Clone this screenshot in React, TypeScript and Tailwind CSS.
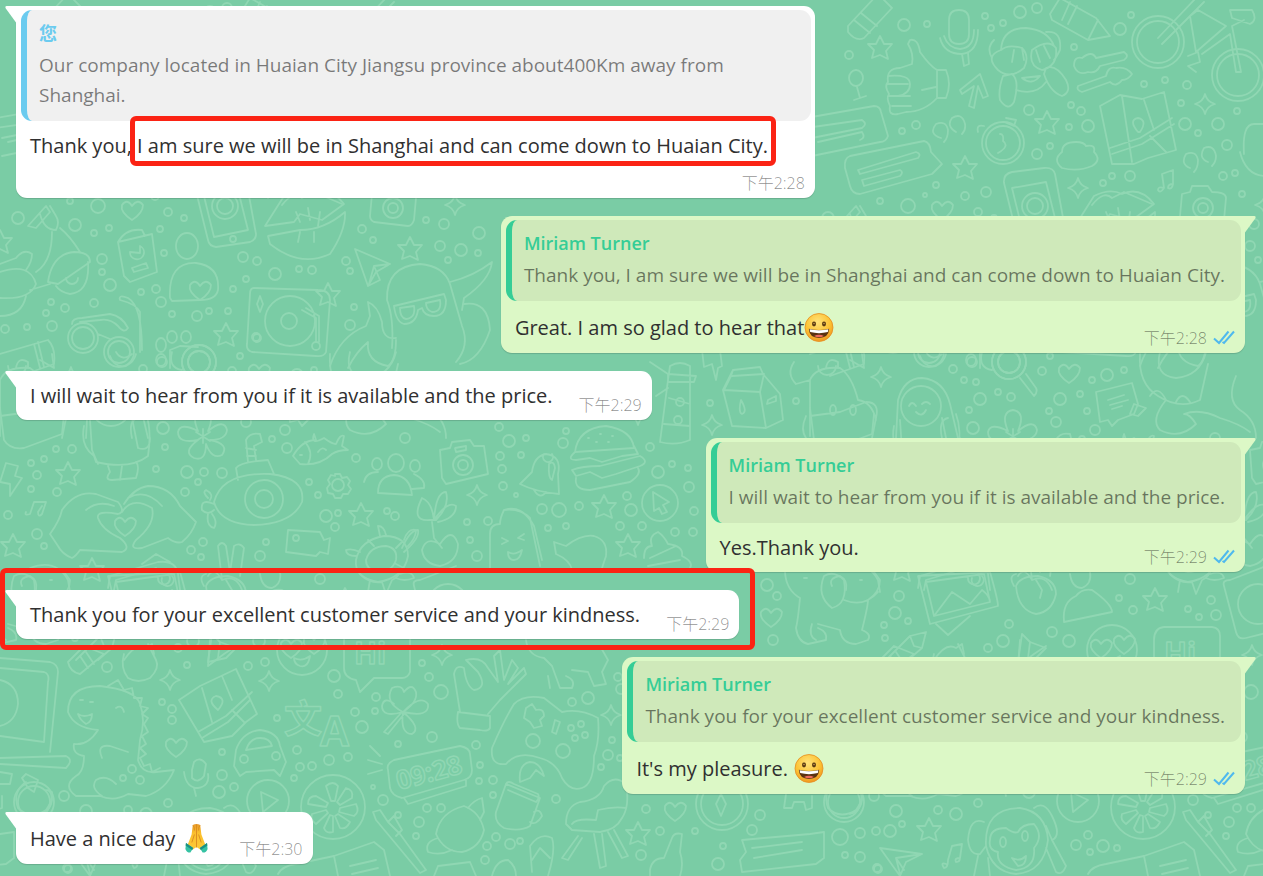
import type { ReactNode } from "react";
import { clsx } from "clsx";

type Message = {
  side: "in" | "out";
  quote?: { author: string; text: string; own?: boolean };
  body: ReactNode;
  time: string;
  boxed?: boolean;
};

/* ---------- Emoji ---------- */

function Grin({ className }: { className?: string }) {
  return (
    <svg viewBox="0 0 32 32" role="img" aria-label="😀" className={clsx("h-[33px] w-8 shrink-0", className)}>
      <defs>
        <radialGradient id="grin-face" cx="0.45" cy="0.3" r="0.75">
          <stop offset="0" stopColor="#ffe37a" />
          <stop offset="0.6" stopColor="#fcc233" />
          <stop offset="1" stopColor="#ee8f1c" />
        </radialGradient>
      </defs>
      <circle cx="15" cy="16" r="14" fill="url(#grin-face)" stroke="#e58e22" strokeWidth="0.8" />
      <ellipse cx="10" cy="12.5" rx="2" ry="2.4" fill="#5a3a12" />
      <ellipse cx="20" cy="12.5" rx="2" ry="2.4" fill="#5a3a12" />
      <circle cx="10" cy="12" r="0.8" fill="#c69a50" />
      <circle cx="20" cy="12" r="0.8" fill="#c69a50" />
      <path d="M4.8 17.2Q15 19.6 25.2 17.2Q24.6 26.4 15 26.4Q5.4 26.4 4.8 17.2Z" fill="#5b3211" />
      <path d="M5.6 17.8Q15 19.9 24.4 17.8L23.8 20.6Q15 22.8 6.2 20.6Z" fill="#fff" />
      <path d="M10 24.6Q15 21.8 20 24.6Q15 27 10 24.6Z" fill="#ee6a5c" />
    </svg>
  );
}

function Pray({ className }: { className?: string }) {
  return (
    <svg viewBox="0 0 32 32" role="img" aria-label="🙏" className={clsx("h-[33px] w-8 shrink-0", className)}>
      <defs>
        <linearGradient id="pray-skin" x1="0" y1="0" x2="0" y2="1">
          <stop offset="0" stopColor="#e79a2c" />
          <stop offset="0.35" stopColor="#fbc02d" />
          <stop offset="1" stopColor="#fdc936" />
        </linearGradient>
      </defs>
      <path d="M11.8 2.4Q15.5 0.8 19.2 2.4L20.4 12L24.4 22.4L19.6 27.2L15.5 24.6L11.4 27.2L6.6 22.4L10.6 12Z" fill="url(#pray-skin)" />
      <path d="M15.5 2V25M12 3Q13.6 4 13.4 8M19 3Q17.4 4 17.6 8M13.4 12L10.8 20M17.6 12L20.2 20" fill="none" stroke="#d98a1f" strokeWidth="0.9" />
      <path d="M5 20.4L12.2 25.6L9.4 30Q5.6 30.2 4.4 26.4Z" fill="#35c2a3" />
      <path d="M26 20.4L18.8 25.6L21.6 30Q25.4 30.2 26.6 26.4Z" fill="#35c2a3" />
      <path d="M5 20.4L12.2 25.6L11.2 27.4L4.6 23Z" fill="#1c8f84" />
      <path d="M26 20.4L18.8 25.6L19.8 27.4L26.4 23Z" fill="#1c8f84" />
    </svg>
  );
}

/* ---------- Wallpaper ---------- */

const TILE = 810;

const stars = [
  [880, 48], [1047, 123], [965, 168], [410, 249], [328, 295], [226, 335], [0, 242], [68, 474], [13, 546],
  [361, 515], [92, 570], [604, 507], [628, 546], [1155, 600], [638, 834], [929, 830],
];

const sparkles = [
  [1205, 104], [1078, 188], [455, 205], [477, 495], [638, 415], [712, 425], [881, 377], [170, 680], [269, 681],
  [611, 715], [442, 655],
];

const hearts = [
  [132, 210], [200, 290], [1069, 373], [771, 617], [176, 747], [675, 811], [125, 526], [1101, 648], [1124, 644],
];

const dots = [
  [904, 25, 6], [927, 24, 3], [849, 55, 4], [985, 16, 3], [1020, 12, 6], [1037, 8, 5], [991, 28, 3], [1003, 23, 3],
  [1120, 29, 6], [1131, 15, 3], [1074, 47, 3], [1144, 84, 3], [1165, 80, 3], [1187, 85, 4], [1181, 103, 3],
  [1185, 124, 6], [1218, 124, 6], [1198, 133, 3], [1237, 111, 3], [1227, 145, 5], [1029, 110, 5], [1071, 105, 3],
  [1081, 111, 4], [1088, 126, 6], [1069, 127, 3], [1037, 154, 5], [1050, 146, 3], [916, 125, 4], [902, 131, 3],
  [936, 185, 3], [925, 195, 2], [965, 196, 4], [986, 192, 5], [1103, 183, 3], [1112, 176, 3], [1130, 176, 5],
  [1223, 176, 4], [1235, 173, 3], [1242, 194, 3], [880, 201, 3],
  [18, 218, 6], [75, 225, 6], [98, 206, 7], [94, 233, 3], [109, 228, 3], [168, 212, 4], [184, 218, 3], [160, 229, 3],
  [164, 253, 3], [102, 259, 5], [102, 272, 3], [110, 285, 6], [141, 292, 3], [156, 289, 4], [161, 302, 5],
  [51, 302, 3], [46, 313, 3], [65, 308, 4], [94, 303, 4], [5, 329, 4], [27, 327, 3], [52, 326, 5], [172, 314, 3],
  [197, 316, 5], [209, 311, 3], [228, 311, 3], [243, 257, 5], [257, 261, 4], [246, 279, 3], [275, 274, 6],
  [299, 269, 3], [312, 270, 4], [233, 289, 3], [240, 356, 3], [256, 337, 4], [346, 261, 4], [350, 271, 3],
  [354, 307, 3], [350, 325, 5], [362, 229, 4], [373, 240, 3], [426, 220, 3], [444, 224, 5], [440, 246, 5],
  [461, 250, 6], [478, 253, 3], [448, 260, 3], [479, 233, 6],
  [163, 428, 6], [165, 447, 3], [72, 449, 4], [56, 449, 3], [44, 459, 3], [31, 463, 3], [37, 475, 4], [31, 489, 3],
  [57, 492, 4], [156, 469, 3], [187, 472, 6], [204, 472, 4], [222, 473, 5], [198, 482, 3], [185, 492, 4],
  [8, 515, 4], [37, 534, 5], [44, 546, 3], [203, 542, 4], [191, 550, 4], [201, 557, 3], [266, 542, 3],
  [260, 556, 5], [285, 430, 5], [272, 439, 3], [287, 448, 5], [405, 438, 5], [356, 458, 4], [309, 482, 3],
  [318, 495, 3], [326, 516, 6], [338, 513, 3], [335, 527, 4], [387, 511, 3], [395, 516, 4],
  [499, 427, 4], [509, 441, 6], [526, 438, 3], [500, 456, 4], [521, 455, 3], [502, 469, 4], [503, 486, 4],
  [516, 495, 2], [563, 443, 5], [566, 431, 3], [542, 509, 5], [559, 510, 7], [579, 506, 4], [548, 528, 3],
  [566, 526, 3], [650, 447, 4], [672, 464, 3], [658, 472, 6], [688, 468, 3], [689, 487, 5], [627, 496, 4],
  [631, 510, 6], [694, 511, 4], [693, 532, 4], [675, 532, 4], [642, 526, 4], [620, 526, 4], [467, 522, 3],
  [488, 521, 4], [470, 540, 3], [477, 556, 5], [710, 403, 3],
  [953, 369, 4], [972, 362, 5], [1042, 371, 4], [964, 380, 3], [976, 382, 3], [980, 399, 6], [998, 392, 3],
  [1011, 397, 4], [969, 410, 3], [1060, 399, 6], [1080, 394, 3], [1092, 380, 3], [1107, 375, 6], [1124, 370, 3],
  [1049, 411, 3], [1056, 422, 5], [1087, 411, 3], [796, 401, 3],
  [767, 585, 6], [777, 596, 4], [773, 640, 5], [899, 596, 5], [895, 613, 6], [884, 625, 3], [908, 621, 3],
  [885, 638, 3], [988, 648, 4], [1003, 641, 6], [1009, 624, 4], [1052, 632, 5], [1069, 641, 6], [1130, 579, 5],
  [1119, 598, 3], [1133, 610, 4], [1188, 609, 3], [1199, 617, 3], [1216, 615, 5], [1211, 600, 4],
  [107, 667, 5], [187, 665, 3], [248, 666, 4], [265, 662, 4], [334, 676, 6], [338, 694, 4], [376, 697, 4],
  [162, 702, 3], [172, 709, 4], [172, 720, 4], [277, 718, 3], [222, 752, 3], [297, 750, 4], [355, 712, 4],
  [375, 711, 3], [362, 727, 6], [329, 760, 5], [348, 757, 4], [300, 767, 4], [312, 766, 4], [294, 778, 3],
  [398, 744, 3], [222, 775, 5], [219, 792, 6], [234, 787, 4], [132, 769, 4], [123, 778, 3], [140, 780, 4],
  [64, 796, 5], [168, 803, 4], [383, 800, 5], [373, 787, 2], [398, 815, 3], [68, 869, 4],
  [432, 737, 5], [422, 663, 3], [429, 677, 4], [441, 692, 7], [476, 745, 4], [480, 765, 3], [479, 781, 3],
  [493, 780, 4], [427, 808, 4], [441, 808, 4], [419, 822, 5], [416, 836, 3], [487, 846, 4], [485, 860, 4],
  [496, 837, 4], [510, 844, 5], [520, 841, 3], [493, 795, 3], [556, 799, 4], [572, 702, 4], [588, 698, 6],
  [612, 740, 3], [608, 755, 5], [620, 758, 3], [601, 767, 3], [618, 677, 4], [621, 689, 5], [646, 809, 4],
  [660, 831, 4], [641, 855, 5], [695, 831, 3], [723, 846, 3], [718, 864, 6], [752, 830, 5], [760, 815, 5],
  [896, 811, 6], [938, 810, 4], [956, 814, 6], [840, 837, 8], [860, 833, 5], [876, 831, 4], [890, 831, 6],
  [902, 824, 3], [845, 855, 3], [860, 857, 5], [877, 868, 4], [1076, 845, 5], [1088, 835, 4], [1090, 852, 3],
  [1103, 846, 6], [1117, 848, 3],
];

const doodles = [
  // pencils, microphone, thumb
  "M848 26L878 -6L892 8L864 38Q856 42 848 32ZM854 20L870 33M861 13L877 26",
  "M1050 14L1060 -2L1096 18L1110 36L1088 40L1052 20ZM1062 20L1070 2M1068 24L1077 6M1088 40L1098 20",
  "M949 20Q949 10 959 10Q969 10 969 20V34Q969 44 959 44Q949 44 949 34ZM940 38Q944 54 962 54Q978 52 978 30M944 36Q948 48 960 49Q974 48 974 30M962 54L964 66L969 64L968 53",
  "M910 40Q918 38 920 52Q930 66 937 70L937 98Q924 112 906 112L898 114Q888 116 890 106Q886 98 889 94Q884 86 888 82Q886 68 900 68L912 64Q914 54 908 44ZM888 84H908M889 96H910M892 106H911M888 76Q910 74 910 84Q910 94 898 96M937 70H946Q952 84 946 98L937 98M922 90L936 87",
  // bicycle
  "M1132 42a26 26 0 1 0 52 0a26 26 0 1 0 -52 0M1137 42a21 21 0 1 0 42 0a21 21 0 1 0 -42 0M1212 75a26 26 0 1 0 52 0a26 26 0 1 0 -52 0M1217 75a21 21 0 1 0 42 0a21 21 0 1 0 -42 0",
  "M1158 38L1196 -2M1162 44L1204 2M1190 16L1196 52L1226 26L1198 10ZM1202 54L1230 34L1236 72L1241 72L1232 26L1244 20M1230 10H1252Q1258 20 1250 24L1232 18ZM1188 56L1198 52L1200 62L1188 66L1196 72",
  // monkey covering its eyes
  "M1001 50Q1002 28 1026 28Q1048 30 1054 46M1001 50Q984 56 998 70Q1010 80 1024 68Q1030 56 1022 48Q1008 44 1001 50ZM1032 50Q1028 66 1042 70Q1058 66 1056 48Q1048 38 1032 50ZM1046 32Q1062 30 1060 50Q1056 58 1054 60M994 40Q986 48 992 58M1003 76Q998 90 1000 100Q1008 112 1014 102Q1020 80 1012 74ZM1046 68Q1056 64 1066 80Q1072 92 1062 96Q1050 92 1044 74ZM1016 90Q1036 96 1046 82M1022 78Q1032 86 1040 76ZM1014 50L1012 62M1022 48L1024 60M1036 50L1040 62M1044 46L1050 58",
  // spoons, arrow, quote marks
  "M1074 66Q1074 56 1082 58Q1092 50 1096 58L1124 52Q1130 56 1124 60L1100 66Q1096 74 1088 72Q1078 76 1074 66ZM1078 86L1106 76Q1108 66 1116 68Q1126 66 1132 74Q1128 80 1122 80Q1116 88 1110 82L1082 92Q1076 90 1078 86Z",
  "M960 90L980 74L988 96L983 98L978 86L974 108L969 106L974 86L962 94Z",
  "M941 138Q928 134 936 124Q946 120 948 130Q948 138 944 142M956 132Q946 126 952 118Q962 112 965 124Q966 130 962 134M1190 168Q1180 164 1186 154Q1196 150 1198 160Q1198 168 1194 172M1208 162Q1198 158 1204 148Q1214 144 1216 156Q1216 162 1212 166",
  // note cards
  "M806 118L874 106Q880 106 881 112L888 136Q886 142 880 142L812 156M806 128L862 120Q868 124 862 128L812 138M818 142L862 132Q866 138 860 140",
  "M850 156L924 141Q930 142 931 152L942 164L932 174L860 194Q852 194 850 186L845 168Q844 158 850 156ZM858 170L916 152Q922 154 918 158L860 174ZM862 180L900 170Q904 172 900 176L864 186Z",
  // stopwatch, cloud, map
  "M982 143a21 21 0 1 0 42 0a21 21 0 1 0 -42 0M986 143a17 17 0 1 0 34 0a17 17 0 1 0 -34 0M1000 134Q1004 134 1003 141Q1010 146 998 153M1006 118L1016 120L1014 126L1004 122M978 132Q976 124 984 126",
  "M1062 168Q1052 160 1062 152Q1062 142 1076 142Q1084 142 1086 146Q1096 144 1094 152Q1102 160 1092 166Q1078 172 1062 168Z",
  "M1100 106L1120 95L1142 99L1164 92L1176 150L1148 158L1134 164L1112 164ZM1110 148L1140 138L1172 118M1112 154L1142 144L1174 124M1150 136L1166 152M1122 96L1132 162M1144 100L1154 130M1138 132Q1128 120 1138 118Q1148 120 1140 132Z",
  // phone, music note, camera
  "M194 183Q193 174 202 172L234 168Q243 167 245 174L256 234Q256 240 250 242L216 247Q209 246 208 240ZM202 188L236 182L248 230L214 237ZM212 206a13 13 0 1 0 26 0a13 13 0 1 0 -26 0M217 206a8 8 0 1 0 16 0a8 8 0 1 0 -16 0M230 239a3 3 0 1 0 6 0a3 3 0 1 0 -6 0",
  "M1164 188Q1158 186 1158 190Q1160 194 1164 188L1162 174L1173 170L1173 184Q1168 184 1168 188Q1172 190 1173 184",
  "M372 194L380 192L382 186L398 186L402 192Q416 192 416 198L414 220Q412 226 408 226L374 222Q370 220 370 216ZM383 208a10 10 0 1 0 20 0a10 10 0 1 0 -20 0M388 208a5 5 0 1 0 10 0a5 5 0 1 0 -10 0",
  // lips, scooter
  "M265 226L284 196Q300 188 312 194Q330 186 344 204L322 220L300 214L294 222ZM268 236L300 230Q324 230 345 212Q346 230 330 254Q300 268 270 244ZM296 212L300 222M308 208L310 220M320 212L318 226M300 232L298 242M314 232L314 242",
  "M28 226L46 206L50 212L36 228ZM40 214Q44 230 56 230Q60 222 56 216L50 206M52 232Q52 262 36 272M60 228Q70 236 80 252M0 264L16 258Q24 248 32 254Q32 262 26 270M48 282Q52 254 74 252Q90 252 90 262L58 284ZM88 262Q90 292 70 294Q60 292 56 286M0 272Q30 262 36 284Q30 300 0 298M66 278a6 6 0 1 0 12 0M0 316Q22 316 26 296M50 284L30 290",
  // book, person, paper plane, turntable
  "M118 242L152 234L157 272L130 282L124 276ZM118 242Q126 228 142 230L145 236M130 252a7 7 0 1 0 10 -6v7ZM132 268L146 263L148 268L134 272Z",
  "M176 246a11 13 0 1 0 22 0a11 13 0 1 0 -22 0M170 298Q168 262 196 263Q220 266 218 290Q216 300 200 300L172 301Z",
  "M355 249L390 264L376 272L368 286ZM390 264L374 266L380 280L368 286M374 266L369 284",
  "M254 288L318 290Q330 290 330 300L326 352Q324 357 316 356L252 352Q246 350 247 344L250 294Q250 288 254 288ZM265 321a25 25 0 1 0 50 0a25 25 0 1 0 -50 0M281 321a8 8 0 1 0 16 0a8 8 0 1 0 -16 0M253 338a4 4 0 1 0 8 0a4 4 0 1 0 -8 0M260 296L263 304L260 312L257 304ZM302 310L316 318V342M306 308L319 316V342M312 346a4 4 0 1 0 8 0a4 4 0 1 0 -8 0",
  // octopus in glasses
  "M392 348Q394 318 387 300Q386 266 420 264Q444 266 450 284L462 326Q470 346 456 362M394 306L444 294L446 300Q446 316 434 316Q424 316 422 308L418 310Q416 324 404 324Q396 322 394 306ZM400 308L414 306Q416 318 406 319Q400 318 400 308ZM426 303L440 300Q442 312 432 312Q426 310 426 303ZM450 282Q474 276 492 262Q490 280 464 298L462 310M464 304Q488 300 490 330Q480 360 460 364M330 366Q340 336 366 326L370 316L368 302Q378 306 382 322Q382 340 396 338M348 368Q356 352 368 342Q366 362 388 366Q396 360 396 340",
  // glasses, paw, lens
  "M68 338a15 15 0 1 0 30 0a15 15 0 1 0 -30 0M72 338a11 11 0 1 0 22 0a11 11 0 1 0 -22 0M104 352a15 15 0 1 0 30 0a15 15 0 1 0 -30 0M108 352a11 11 0 1 0 22 0a11 11 0 1 0 -22 0M98 334L110 339M72 324Q72 318 82 318L110 314Q122 316 128 328Q124 334 118 326Q110 318 100 320L80 322M140 352V312Q136 304 120 300Q118 294 128 298Q142 306 142 350",
  "M156 345a5 7 0 1 0 10 0a5 7 0 1 0 -10 0M167 337a5 6 0 1 0 10 0a5 6 0 1 0 -10 0M181 337a5 6 0 1 0 10 0a5 6 0 1 0 -10 0M156 360a5 6 0 1 0 10 0a5 6 0 1 0 -10 0M170 368V350L180 346L198 347M182 362a17 17 0 1 0 34 0a17 17 0 1 0 -34 0M188 362a11 11 0 1 0 22 0a11 11 0 1 0 -22 0",
  "M0 354L48 340Q56 348 54 364L20 376M34 344L40 368M38 342L44 367M8 366a9 9 0 1 0 18 0",
  // bag, backpack, flower, submarine, fish
  "M0 408L4 440Q10 450 24 448L62 434L64 414M84 426Q80 446 94 456L96 462Q130 470 148 456Q152 430 146 414M90 420L92 450L98 464M132 418L138 448Q150 452 150 438M108 466L110 472Q104 480 112 480L136 478Q140 466 136 462M122 466L120 480",
  "M198 431Q190 412 203 410Q216 412 208 431Q224 418 227 430Q226 440 210 440Q230 444 222 455Q212 460 206 444Q206 462 194 458Q182 452 198 440Q178 444 178 432Q180 422 198 431ZM203 429V443M196 432L210 441M196 441L210 432",
  "M214 502Q222 472 270 474Q306 478 302 502Q292 524 254 525Q220 524 214 502ZM245 499a19 19 0 1 0 38 0a19 19 0 1 0 -38 0M255 499a9 9 0 1 0 18 0a9 9 0 1 0 -18 0M238 480L236 468Q240 462 268 460L274 474M248 462L246 440Q250 432 260 434L262 442L254 446L256 460M246 448L256 450M247 456L256 456M214 504Q200 498 202 510Q208 516 214 510M208 498Q202 492 206 490Q214 494 210 500M208 514Q206 526 214 528Q218 522 212 514",
  "M293 456Q302 440 316 440L314 434Q310 446 324 438Q332 444 336 444Q340 434 344 436L342 446L348 450Q338 450 332 454Q320 466 300 464ZM305 442Q314 452 308 464M300 455h2M318 452Q322 446 326 450",
  "M335 474l5 0l2 4l5 -1l3 4l-2 4l3 4l-3 5l-5 0l-2 4l-6 0l-2 -4l-5 -1l-1 -5l3 -4l-2 -4l3 -5l4 1ZM332 485a6 6 0 1 0 12 0a6 6 0 1 0 -12 0",
  "M388 463a8 9 0 1 0 16 0a8 9 0 1 0 -16 0M378 493Q378 476 394 475Q410 476 412 495ZM372 464a5 6 0 1 0 10 0a5 6 0 1 0 -10 0M410 466a5 6 0 1 0 10 0a5 6 0 1 0 -10 0M364 482Q366 472 378 472M414 474Q426 480 424 488L412 489",
  "M6 463L18 466L15 476L22 478L10 496L10 484L0 482ZM26 512Q24 516 30 514L34 502L46 502L42 514Q38 518 38 512L42 506",
  // heart hands
  "M58 546L50 534Q60 520 62 510Q76 490 96 494L118 502Q126 512 118 514Q96 510 98 518Q102 530 120 538Q132 548 122 552L80 550Q76 556 72 558Q62 554 58 546ZM122 512Q132 496 152 508Q156 524 136 540Q128 550 142 548L168 538Q176 544 182 542Q192 534 196 522L190 516L180 506Q170 486 148 486Q134 488 124 504M86 510Q98 500 114 506M128 498Q146 488 162 506",
  // film camera, turtle, peace sign, frame
  "M288 530L320 532L324 540L330 538L328 554L320 552L316 556L286 552ZM293 538a3 3 0 1 0 6 0a3 3 0 1 0 -6 0",
  "M356 560Q360 540 384 536Q408 536 408 556Q404 578 378 582Q354 578 356 560ZM366 560Q370 546 386 546Q398 548 396 560Q392 572 378 572Q366 570 366 560ZM356 556Q346 556 346 550Q352 548 360 552M380 536L378 526Q384 526 386 535M404 540Q408 528 416 530Q416 538 408 546M400 574Q412 570 414 578Q404 582 396 578M370 580L368 592M374 546L368 540M396 548L402 542M396 564L404 568",
  "M222 580L218 546Q222 540 226 546L230 572L234 546Q240 542 244 548L240 576M208 576Q214 566 222 580Q236 574 242 590",
  "M108 588L110 576L158 562Q176 560 178 574L180 590M114 590L116 580L156 568M142 564L156 554L170 562M162 578a6 6 0 1 0 10 -2M22 586Q18 578 30 576Q38 580 36 590M30 568Q56 558 68 580L70 592",
  // camera, bell, burger, cursor
  "M440 450L450 448L452 442L470 440L474 446L484 446L488 474L446 484L442 478ZM453 465a10 10 0 1 0 20 0a10 10 0 1 0 -20 0M458 465a5 5 0 1 0 10 0a5 5 0 1 0 -10 0M455 448L466 446L466 450L456 452Z",
  "M520 484L532 472Q534 456 546 454Q562 456 558 474L559 494Q536 492 520 484ZM544 454a5 5 0 1 0 8 0M534 490Q540 500 546 492M549 464Q554 460 555 468L552 480Q548 478 549 464Z",
  "M575 452Q578 428 606 426Q632 430 634 448ZM575 452Q566 460 576 460L590 458L602 462L622 456L638 454L634 446M572 470Q582 466 600 466L640 456Q650 462 640 466L616 474L602 478L590 472L576 476ZM576 478Q574 490 590 490L630 482Q642 474 638 468M588 438h1M600 434h1M612 436h1M596 442h1M608 442h1",
  "M642 503a18 18 0 1 0 36 0a18 18 0 1 0 -36 0M653 492L669 502L663 505L667 512L662 514L659 508L654 511Z",
  // cherry, ice lolly, cat, swirl
  "M430 520Q410 522 422 498Q432 502 434 520ZM434 520Q436 492 446 492Q450 506 436 520ZM434 520Q448 500 456 506Q456 518 438 522M432 522L434 538M422 550Q426 536 440 544Q452 526 458 544Q458 562 440 566Q424 564 422 550ZM434 538L442 548M402 548Q410 530 418 530Q420 538 404 552",
  "M490 568V534Q490 524 500 524Q500 518 504 510Q520 508 530 518L540 566M504 510Q522 504 534 526L542 560M502 538L508 541L502 544M524 534L518 538L524 540M508 552Q514 556 522 550Q520 560 514 560Q508 560 508 552Z",
  "M554 542L566 546Q582 534 594 536Q608 540 606 556L602 568M554 542L556 554Q570 560 572 570",
  "M644 558Q644 546 652 546Q648 536 658 532Q664 536 668 544Q684 546 682 556Q694 562 690 568M650 558L676 546M648 566L680 560",
  // lighthouse, milk carton, rucksack
  "M660 442L668 380L670 366Q680 360 690 366L690 380L690 440Q676 446 660 442ZM668 374L696 376L694 382L668 382ZM669 398L690 404M664 424L690 426M676 402a4 4 0 1 0 8 0a4 4 0 1 0 -8 0M674 420a4 4 0 1 0 8 0a4 4 0 1 0 -8 0M650 362L668 374M656 396L668 388",
  "M733 370L760 367L763 374L780 394L783 420L766 428L732 426L723 390ZM733 370L731 376L724 390L760 392L764 374L732 376M760 392L766 428M741 400Q738 412 742 414Q748 412 741 400ZM768 400L776 396L776 401L767 404ZM702 350L704 367L712 364L716 380L718 368L722 366L720 350",
  "M810 436V380Q816 366 840 368Q852 376 858 400Q872 402 876 420M810 416L840 412L866 402Q880 402 876 418L872 438M794 362Q786 374 796 384L810 380M826 368Q828 356 838 362V368M806 416Q800 430 806 438M830 410a3 5 0 1 0 6 0a3 5 0 1 0 -6 0M850 410a3 5 0 1 0 6 0a3 5 0 1 0 -6 0M850 360L864 368L862 354",
  // penguin, magnifier, message card
  "M896 438L898 400Q904 378 922 378Q944 380 950 404L958 438M901 406a20 20 0 1 0 40 0a20 20 0 1 0 -40 0M909 406Q912 400 916 406M922 404Q926 400 930 404M916 412Q922 418 926 410M942 438Q938 420 948 418",
  "M992 362a17 17 0 1 0 34 0a17 17 0 1 0 -34 0M998 362a11 11 0 1 0 22 0a11 11 0 1 0 -22 0M1020 378L1034 396Q1038 392 1036 388L1026 374M982 352Q978 368 992 370M920 356Q924 368 936 366Q944 362 946 354M926 352Q932 362 942 354",
  "M1096 392L1132 383L1138 404L1134 414L1118 420L1112 426L1108 420L1100 422ZM1108 400L1124 395M1110 405L1128 400M1112 409L1122 406M1134 404L1146 408L1138 416L1130 414Z",
  "M1140 354Q1138 384 1158 396Q1180 410 1200 400L1208 364M1160 352Q1154 376 1176 378Q1200 376 1206 352M1166 400Q1150 420 1160 430Q1180 440 1196 424Q1190 414 1184 414Q1200 408 1220 418Q1240 424 1250 432M1236 376Q1226 400 1240 410Q1256 420 1256 438M1150 396Q1158 384 1166 400M1176 402Q1182 390 1190 402",
  // dog, acorn, person, picture
  "M785 572Q786 590 800 598Q798 620 796 628Q798 642 808 644L826 640Q828 632 818 628M818 624L840 630Q842 644 856 644L868 640Q872 634 862 630Q868 606 868 600Q880 592 880 580L874 572M824 576Q816 596 832 608Q848 604 844 580Q834 570 824 576ZM844 600Q864 608 878 592M812 624Q808 636 816 640M804 578h3M860 580h2",
  "M918 576L990 572Q998 600 998 606L930 624ZM926 582L984 574L990 602L934 616ZM934 616L952 592L970 604L982 590Q990 596 990 602M936 624L948 635L970 616M968 578a6 6 0 1 0 10 -4",
  "M1016 586Q1020 576 1038 576Q1056 580 1056 594Q1052 612 1036 614Q1018 610 1016 586ZM1014 586Q1008 576 1016 574M1036 580L1042 590L1040 598",
  "M1070 574Q1072 588 1082 588Q1092 584 1090 572M1064 622Q1062 602 1076 596Q1082 588 1092 590Q1112 604 1112 612Z",
  "M1170 574Q1180 584 1192 582L1196 594L1202 580Q1210 576 1210 570M1224 586Q1222 580 1230 580L1266 566M1224 586L1236 632Q1238 640 1246 638L1270 632M1238 604a20 20 0 1 0 40 0a20 20 0 1 0 -40 0",
  // pencil, banana, plane, heart-eyed face, speech bubble
  "M886 660L910 636L926 632L922 648L908 660M910 636L914 646L922 648M934 660Q946 642 956 648L962 644L964 654",
  "M1018 662L1022 634L1030 642L1046 648L1036 658ZM1030 642L1028 658",
  "M1087 650a25 25 0 1 0 50 0a25 25 0 1 0 -50 0M1104 658Q1112 662 1120 656Q1118 668 1110 666Q1104 664 1104 658Z",
  "M344 640Q344 628 354 627H402Q410 628 410 636V672Q408 678 402 678H374L360 692L356 680Q344 678 344 668Z",
  // laptop, tube, pear
  "M0 658L50 662Q58 664 58 672L50 752M0 668L44 672Q50 674 48 682L44 742L0 736M0 758L66 756Q74 760 66 768L0 764M0 680Q18 684 18 704Q16 722 0 726M0 772L12 774L10 784H0",
  "M68 662L84 646L104 654L80 674Q70 672 68 662ZM80 656L88 668M86 652L94 664M124 654Q120 668 128 678Q138 684 150 678Q160 668 156 660L148 644M210 640L208 666L224 654L236 646",
  // map, dinosaur
  "M179 700L200 686L236 669L257 714L246 722L232 736L204 742ZM198 732L226 716L252 692M202 738L228 722L250 700M232 710L244 722M202 688L212 722M222 676L232 700M218 710Q206 700 216 696Q228 698 218 710Z",
  "M68 712Q68 686 100 686Q136 690 140 704Q146 720 140 740L138 760Q142 774 156 772L174 770Q166 790 146 796L128 794Q114 802 100 796L76 796Q62 786 76 776Q84 772 84 756Q72 754 74 744Q88 746 98 730Q74 728 68 712ZM108 686L118 680L124 690L132 688L134 698L142 698L140 706L148 708L142 714L148 718L144 724L148 732L142 736L146 744L140 748L146 754L140 758L144 766L150 764L152 772L160 768M80 700h3M90 702h3M78 714Q84 718 92 714Q92 722 86 724Q80 720 78 714ZM116 708Q122 704 124 712M102 758Q96 744 110 746L128 752M102 796Q90 788 96 780Q106 774 116 784",
  // car, microphone, play, citrus
  "M234 766L236 750Q242 732 260 730Q278 732 280 746L286 762L280 776L274 770L246 772L240 776ZM246 750Q250 738 260 738Q270 738 272 746ZM240 759a4 4 0 1 0 8 0a4 4 0 1 0 -8 0M272 756a4 4 0 1 0 8 0a4 4 0 1 0 -8 0",
  "M192 770L194 762Q200 756 206 764L204 776Q198 784 192 778ZM184 772Q186 788 198 788Q210 786 208 774M194 788L196 796",
  "M247 801a21 21 0 1 0 42 0a21 21 0 1 0 -42 0M261 792L278 800L263 812Z",
  "M301 807a32 32 0 1 0 64 0a32 32 0 1 0 -64 0M331 801L326 786Q333 780 338 786L335 801ZM337 802L346 788Q354 790 352 798L340 805ZM340 808L356 804Q360 812 354 816L339 812ZM338 814L350 822Q346 830 340 828L335 816ZM333 816V832Q326 834 324 828L330 815ZM328 813L316 824Q310 820 312 814L326 810ZM326 807L308 804Q308 796 316 796L328 803Z",
  // refresh, clover, alarm clock, toothbrush
  "M26 782Q12 792 18 808Q30 820 46 810Q56 796 48 790M22 778L26 774L38 780L34 792L28 788ZM46 790L52 792Q54 810 40 814",
  "M403 712Q384 702 392 688Q402 684 404 692Q412 682 416 692Q418 702 403 712ZM403 712Q382 718 382 706Q384 696 394 704M403 712Q420 694 428 704Q430 718 403 712ZM403 712Q400 734 412 734Q422 728 403 712M402 712L384 732L388 734L404 714",
  "M388 770Q386 764 394 760L460 746Q470 748 470 754L472 770Q472 778 464 780L402 798Q392 796 390 788ZM404 798L408 804L466 786V780M370 746Q374 750 380 756M368 760L382 764M368 774L382 770",
  "M373 812L380 810L388 822L400 834L426 870L420 873L396 844L376 820ZM388 822L394 816L402 830L396 836M278 874Q282 866 296 864L334 856L374 842L384 850L390 876M334 856L338 876M350 866L376 860M352 874L378 868",
  // gamepad, tulip, mug, croissant
  "M492 748Q504 720 514 704Q524 694 544 698L562 712Q580 708 598 718Q600 740 594 756Q594 784 582 788Q570 792 562 778Q556 762 540 758Q518 750 506 764Q490 766 492 748ZM526 708L532 704L536 710Q544 708 544 716L540 720L542 726L534 728L530 722L524 718ZM526 741a7 7 0 1 0 14 0a7 7 0 1 0 -14 0M556 751a7 7 0 1 0 14 0a7 7 0 1 0 -14 0M555 720L560 722L556 734L552 732ZM568 728a3 3 0 1 0 6 0a3 3 0 1 0 -6 0M578 724a3 3 0 1 0 6 0a3 3 0 1 0 -6 0M572 738a3 3 0 1 0 6 0a3 3 0 1 0 -6 0M582 735a3 3 0 1 0 6 0a3 3 0 1 0 -6 0",
  "M460 712L454 674Q456 664 464 668Q466 686 474 690Q488 688 478 672L466 660Q482 656 488 668L498 682M498 682L494 656L500 650L504 680L512 660L518 668L508 684L524 668L526 674L500 700L488 714M458 712L490 716L490 728Q488 732 480 730L460 728Q456 724 458 712Z",
  "M506 784L540 798L530 826Q520 832 504 828Q494 822 496 812ZM506 784Q508 780 514 784L538 794Q540 798 536 802L508 790M534 812Q540 808 542 816Q536 826 530 822M520 782Q518 764 530 762Q540 762 544 776L536 770L530 778Z",
  "M436 834Q440 812 464 806Q480 812 484 830Q480 848 462 852Q444 852 436 834ZM438 838Q424 842 428 852Q440 856 452 850M468 808Q474 800 482 798L484 812L480 820",
  // chair, flip-flops, compass, bottle, card
  "M566 824Q566 806 580 802Q600 800 604 786Q614 774 626 784Q630 806 622 818Q616 830 600 832L572 830ZM572 824Q576 818 596 820L598 810Q614 806 626 808M578 836L562 858L568 860L582 838M594 834L600 868L606 866L602 834M608 832L622 858L628 856L614 830",
  "M532 872L530 846Q540 832 552 838Q556 850 548 876M532 860L540 848L550 858M492 876Q496 860 508 860Q516 866 516 876M434 876L438 866L470 862L476 876",
  "M696 804a26 26 0 1 0 52 0a26 26 0 1 0 -52 0M701 804a21 21 0 1 0 42 0a21 21 0 1 0 -42 0M721 794L726 804L721 816L716 804Z",
  "M672 838Q674 832 682 834L680 852Q684 864 680 876M672 838L664 858Q652 858 650 870V876M742 840L764 838L810 834L824 832V858L816 864L742 872L740 860L746 852ZM752 848L802 842M754 858L802 850",
  // ring, goat, monkey, paper plane
  "M824 802a20 20 0 1 0 40 0a20 20 0 1 0 -40 0M828 802a16 16 0 1 0 32 0a16 16 0 1 0 -32 0M786 794L784 808L792 808L794 802H804L806 810L812 808L812 796",
  "M986 846Q984 808 1020 808Q1046 812 1048 840Q1044 872 1016 874Q992 872 986 846ZM990 840Q990 828 1006 828Q1014 834 1018 832Q1022 824 1034 824Q1044 836 1034 848Q1036 868 1016 870Q996 866 998 852Q988 850 990 840ZM1012 858Q1020 862 1026 856Q1026 866 1018 866ZM1000 842a3 5 0 1 0 6 0a3 5 0 1 0 -6 0M1022 836a3 5 0 1 0 6 0a3 5 0 1 0 -6 0M984 822Q970 816 968 840Q970 856 980 854L986 846M1034 808Q1044 800 1052 816Q1062 836 1052 840L1046 826M1052 840L1066 866Q1062 876 1056 872L1046 848M978 856L974 876M988 858L990 876",
  "M880 848L922 854L906 862L900 876ZM922 854L896 858L904 870M896 858L900 874M946 864Q940 862 944 868Q948 868 948 860L952 846L962 844L960 858Q954 858 956 862Q960 862 960 858",
  // hound, wine glass, helmet
  "M526 640Q528 656 544 658L552 666L560 688L572 688Q576 680 566 676M572 670L588 672L594 686L606 684L602 672L608 660L600 646M548 676L550 688",
  "M849 78a7 8 0 1 0 14 0a7 8 0 1 0 -14 0M857 87L860 98M854 100L866 96",
  "M1244 154Q1242 124 1254 124H1266M1240 152Q1246 176 1266 176M1092 205Q1104 190 1112 198L1124 192L1152 204",
];

function Wallpaper() {
  return (
    <svg
      aria-hidden
      className="pointer-events-none absolute inset-0 size-full"
      fill="none"
      stroke="#90d7b3"
      strokeWidth="1.8"
      strokeLinecap="round"
      strokeLinejoin="round"
    >
      <defs>
        <path id="star" d="M0 -12L4 -4L12 -4L6 3L8 11L0 7L-8 10L-6 2L-12 -4L-4 -4Z" />
        <path id="sparkle" d="M0 -10Q2 -2 10 0Q2 2 0 10Q-2 2 -10 0Q-2 -2 0 -10Z" />
        <path id="heart" d="M0 10Q-12 2 -10 -5Q-5 -12 0 -4Q6 -12 11 -5Q11 3 0 10Z" />
        <g id="tile">
          {dots.map(([x, y, r]) => (
            <circle key={`${x}-${y}`} cx={x} cy={y} r={r} />
          ))}
          {stars.map(([x, y]) => (
            <use key={`${x}-${y}`} href="#star" x={x} y={y} />
          ))}
          {sparkles.map(([x, y]) => (
            <use key={`${x}-${y}`} href="#sparkle" x={x} y={y} />
          ))}
          {hearts.map(([x, y]) => (
            <use key={`${x}-${y}`} href="#heart" x={x} y={y} />
          ))}
          {doodles.map((d) => (
            <path key={d} d={d} />
          ))}
          <g fontWeight="700" strokeWidth="1.5">
            <text x="354" y="664" fontSize="30">
              Hi
            </text>
            <text x="284" y="732" fontSize="38">
              文
            </text>
            <text x="320" y="746" fontSize="42">
              A
            </text>
            <text fontSize="26" transform="translate(399 790) rotate(-15)">
              09:28
            </text>
          </g>
        </g>
      </defs>
      <use href="#tile" x={-TILE} />
      <use href="#tile" />
      <use href="#tile" x={TILE} />
    </svg>
  );
}

/* ---------- Bubbles ---------- */

function Highlight({ className }: { className: string }) {
  return (
    <span
      aria-hidden
      className={clsx("pointer-events-none absolute z-10 rounded-md border-[5px] border-[#fb2314]", className)}
    />
  );
}

function Tail({ side }: { side: Message["side"] }) {
  return (
    <svg
      aria-hidden
      viewBox="0 0 11 17"
      className={clsx(
        "absolute top-0 h-[17px] w-[11px]",
        side === "in" ? "-left-[11px] text-white" : "-right-[11px] -scale-x-100 text-[#dcf8c6]",
      )}
    >
      <path d="M11 0H1.5Q-0.5 0.4 0.8 2.4L11 16.5Z" fill="currentColor" />
    </svg>
  );
}

function Ticks() {
  return (
    <svg
      aria-label="Read"
      role="img"
      viewBox="0 0 22 16"
      className="h-4 w-[22px]"
      fill="none"
      stroke="#4fb9ee"
      strokeWidth="2"
    >
      <path d="M1 8.5L6 13L15.5 1.5M9.5 12L11 13L21 1.5" />
    </svg>
  );
}

function Bubble({ side, quote, body, time, boxed }: Message) {
  return (
    <li
      className={clsx(
        "relative w-fit max-w-[65%] rounded-[11px] shadow-[0_1px_1px_rgb(0_0_0_/_15%)]",
        side === "in" ? "self-start rounded-tl-none bg-white" : "self-end rounded-tr-none bg-[#dcf8c6]",
      )}
    >
      <Tail side={side} />
      {quote && (
        <div className="pt-1 pr-1 pl-[5px]">
          <blockquote
            className={clsx(
              "overflow-hidden rounded-[11px] border-l-[6px] bg-black/[0.06] pt-2 pr-4 pb-[11px] pl-3 leading-[30px]",
              quote.own ? "border-[#6bcbef]" : "border-[#35cd96]",
            )}
          >
            <cite
              className={clsx(
                "block text-lg leading-[30px] font-semibold not-italic",
                quote.own ? "text-[#6bcbef]" : "text-[#35cd96]",
              )}
            >
              {quote.author}
            </cite>
            <p className="mt-0.5 text-[19px] leading-[30px] text-black/50">{quote.text}</p>
          </blockquote>
        </div>
      )}
      <div className="flex flex-wrap items-end gap-x-[26px] gap-y-[3px] pt-[10px] pr-[10px] pl-[14px]">
        <p className="mr-auto mb-[9px] flex items-center text-xl leading-[30px] text-[#303030]">{body}</p>
        <div className="mb-[5px] ml-auto flex items-center gap-1.5 text-base leading-5 font-light text-black/45">
          <time>{time}</time>
          {side === "out" && <Ticks />}
        </div>
      </div>
      {boxed && <Highlight className="-top-[22px] -right-4 -bottom-[11px] -left-4" />}
    </li>
  );
}

const messages: Message[] = [
  {
    side: "in",
    quote: {
      author: "您",
      text: "Our company located in Huaian City Jiangsu province about400Km away from Shanghai.",
      own: true,
    },
    body: (
      <span>
        Thank you,{" "}
        <span className="relative">
          I am sure we will be in Shanghai and can come down to Huaian City.
          <Highlight className="-top-4 -right-2 -bottom-[7px] -left-[7px]" />
        </span>
      </span>
    ),
    time: "下午2:28",
  },
  {
    side: "out",
    quote: {
      author: "Miriam Turner",
      text: "Thank you, I am sure we will be in Shanghai and can come down to Huaian City.",
    },
    body: (
      <>
        Great. I am so glad to hear that
        <Grin />
      </>
    ),
    time: "下午2:28",
  },
  {
    side: "in",
    body: "I will wait to hear from you if it is available and the price.",
    time: "下午2:29",
  },
  {
    side: "out",
    quote: {
      author: "Miriam Turner",
      text: "I will wait to hear from you if it is available and the price.",
    },
    body: "Yes.Thank you.",
    time: "下午2:29",
  },
  {
    side: "in",
    body: "Thank you for your excellent customer service and your kindness.",
    time: "下午2:29",
    boxed: true,
  },
  {
    side: "out",
    quote: {
      author: "Miriam Turner",
      text: "Thank you for your excellent customer service and your kindness.",
    },
    body: (
      <>
        It's my pleasure.
        <Grin className="ml-1.5" />
      </>
    ),
    time: "下午2:29",
  },
  {
    side: "in",
    body: (
      <>
        Have a nice day
        <Pray className="ml-1.5" />
      </>
    ),
    time: "下午2:30",
  },
];

export default function App() {
  return (
    <main className="relative min-h-screen overflow-hidden bg-[#7acca5] font-['Open_Sans','Noto_Sans_CJK_SC',sans-serif]">
      <Wallpaper />
      <ul className="relative flex flex-col gap-[18px] pt-1.5 pr-[18px] pb-3 pl-4">
        {messages.map((message, i) => (
          <Bubble key={i} {...message} />
        ))}
      </ul>
    </main>
  );
}
